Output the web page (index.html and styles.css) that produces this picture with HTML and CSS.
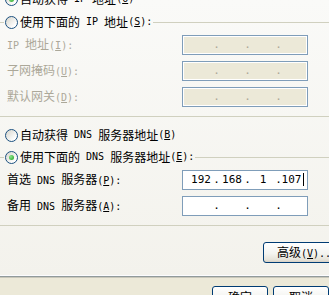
FILE: index.html
```html
<!DOCTYPE html>
<html lang="zh-CN">
<head>
    <meta charset="UTF-8">
    <title>Internet 协议 (TCP/IP) 属性</title>
    <link rel="stylesheet" href="styles.css">
</head>
<body>

<div class="page">
    <div class="opt top"><span class="radio on"></span>自动获得<span class="en"> IP </span>地址<span class="en">(<u>O</u>)</span></div>

    <fieldset class="group">
        <legend><span class="opt"><span class="radio"></span>使用下面的<span class="en"> IP </span>地址<span class="en">(<u>S</u>):</span></span></legend>
        <div class="fields">
            <span class="lbl off"><span class="en">IP </span>地址<span class="en">(<u>I</u>):</span></span>
            <div class="ipbox off"><span></span><span class="dot">.</span><span></span><span class="dot">.</span><span></span><span class="dot">.</span><span></span></div>

            <span class="lbl off">子网掩码<span class="en">(<u>U</u>):</span></span>
            <div class="ipbox off"><span></span><span class="dot">.</span><span></span><span class="dot">.</span><span></span><span class="dot">.</span><span></span></div>

            <span class="lbl off">默认网关<span class="en">(<u>D</u>):</span></span>
            <div class="ipbox off"><span></span><span class="dot">.</span><span></span><span class="dot">.</span><span></span><span class="dot">.</span><span></span></div>
        </div>
    </fieldset>

    <div class="opt dns-auto"><span class="radio"></span>自动获得<span class="en"> DNS </span>服务器地址<span class="en">(<u>B</u>)</span></div>

    <fieldset class="group dns">
        <legend><span class="opt"><span class="radio on"></span>使用下面的<span class="en"> DNS </span>服务器地址<span class="en">(<u>E</u>):</span></span></legend>
        <div class="fields">
            <span class="lbl">首选<span class="en"> DNS </span>服务器<span class="en">(<u>P</u>):</span></span>
            <div class="ipbox"><span>192</span><span class="dot">.</span><span>168</span><span class="dot">.</span><span>1</span><span class="dot">.</span><span>107<i class="caret"></i></span></div>

            <span class="lbl">备用<span class="en"> DNS </span>服务器<span class="en">(<u>A</u>):</span></span>
            <div class="ipbox"><span></span><span class="dot">.</span><span></span><span class="dot">.</span><span></span><span class="dot">.</span><span></span></div>
        </div>
    </fieldset>

    <div class="advanced">
        <button class="btn">高级<span class="en">(<u>V</u>)...</span></button>
    </div>
</div>

<div class="footer">
    <button class="btn">确定</button>
    <button class="btn">取消</button>
</div>

</body>
</html>
```

FILE: styles.css
```css
* {
    box-sizing: border-box;
}
body {
    margin: 0;
    width: 329px;
    height: 295px;
    overflow: hidden;
    background: #ECE9D8;
    font: 12px/16px "Noto Sans CJK SC", sans-serif;
    color: #000;
}
.en {
    font: 10px/16px "DejaVu Sans Mono", monospace;
    white-space: pre;
}
.page {
    width: 345px;
    height: 277px;
    overflow: hidden;
    background: linear-gradient(#FAFAF8, #F3F2EC);
    border-bottom: 1px solid #919B9C;
    box-shadow: inset 0 -1px #FCFCFE, 0 1px #C9C7BA;
}
.opt {
    display: flex;
    align-items: center;
    height: 16px;
    white-space: nowrap;
}
.opt .radio {
    margin-right: 2px;
}
.top {
    margin-top: -9px;
    padding-left: 5px;
}
.radio {
    flex: none;
    display: grid;
    place-items: center;
    width: 13px;
    height: 13px;
    border: 1px solid #1C5180;
    border-radius: 50%;
    background: linear-gradient(135deg, #D6D5CC, #FFFFFF 80%);
}
.radio.on::after {
    content: "";
    width: 5px;
    height: 5px;
    border-radius: 50%;
    background: radial-gradient(circle at 35% 35%, #8BE58B, #1D9F1D);
}
.group {
    width: 350px;
    min-width: 0;
    margin: 7px 0 0 -4px;
    padding: 0 0 9px;
    border: 1px solid #D0D0BF;
    border-radius: 3px;
}
.group legend {
    margin-left: 7px;
    padding: 0 1px;
}
.dns-auto {
    margin-top: 10px;
    padding-left: 5px;
}
.dns {
    margin-top: 6px;
}
.fields {
    display: grid;
    grid-template-columns: 175px 126px;
    row-gap: 6px;
    align-items: center;
    margin-top: 5px;
    padding-left: 10px;
}
.lbl {
    white-space: nowrap;
}
.off {
    color: #ACA899;
}
.ipbox {
    display: grid;
    grid-template-columns: 30px 1px 30px 1px 30px 1px 1fr;
    align-items: center;
    height: 20px;
    padding-left: 3px;
    border: 1px solid #7F9DB9;
    background: #fff;
    font: 11px/18px "DejaVu Sans Mono", monospace;
    text-align: center;
}
.ipbox.off {
    background: #ECE9D8;
    box-shadow: inset 0 0 0 1px #fff;
}
.dot {
    display: flex;
    justify-content: center;
}
.caret {
    display: inline-block;
    width: 1px;
    height: 13px;
    margin-left: 2px;
    background: #000;
    vertical-align: -3px;
}
.advanced {
    margin-top: 16px;
    padding-left: 263px;
}
.btn {
    width: 75px;
    height: 21px;
    padding: 0;
    border: 1px solid #003C74;
    border-radius: 3px;
    background: linear-gradient(#FFFFFF, #F4F4F0 55%, #E6E3D9 88%, #D6D0C5);
    font: inherit;
    color: #000;
    white-space: nowrap;
    text-align: left;
    padding-left: 13px;
}
.footer {
    display: flex;
    gap: 5px;
    padding: 9px 0 0 212px;
}
.footer .btn {
    text-align: center;
    padding-left: 0;
}
```
